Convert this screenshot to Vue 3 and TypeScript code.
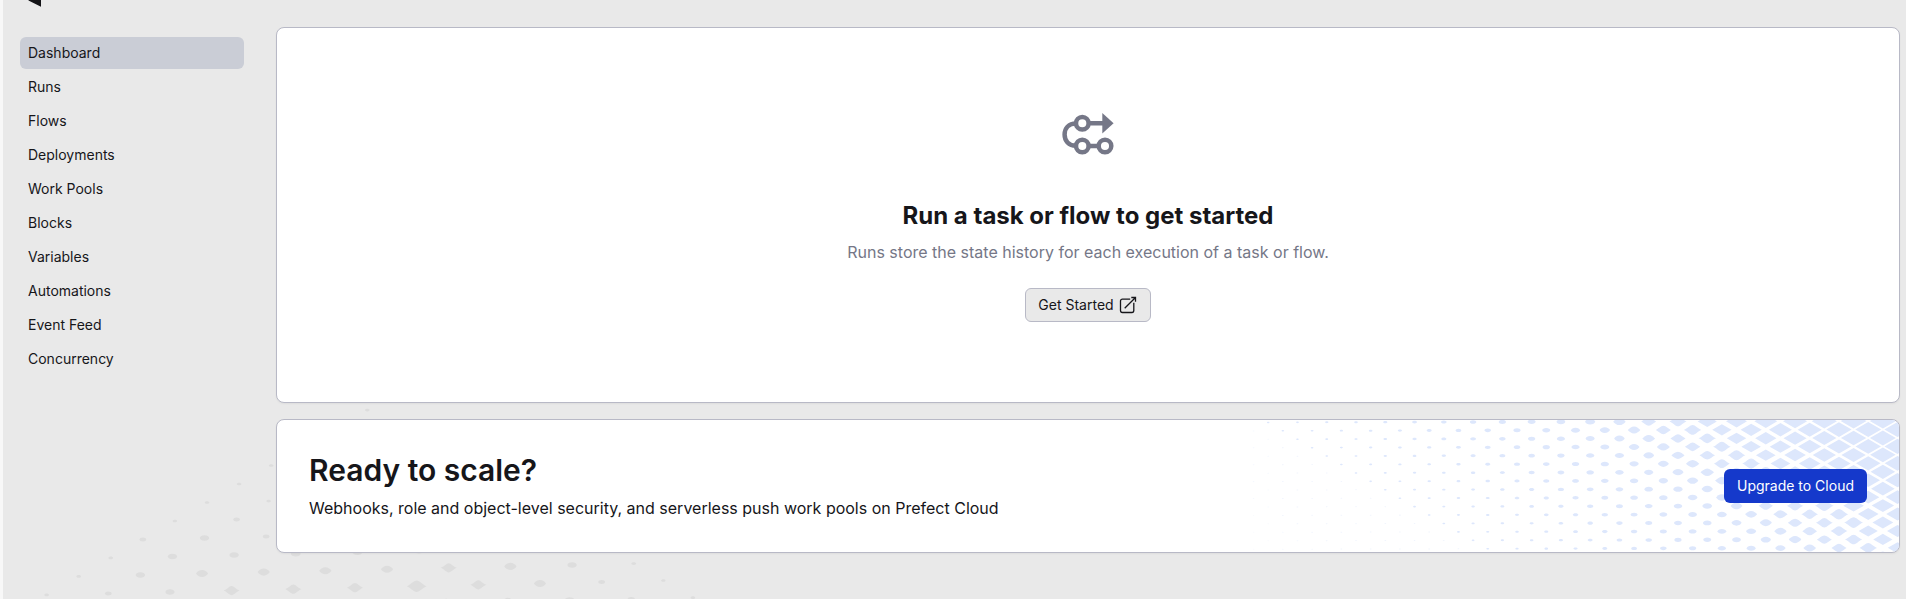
<script setup lang="ts">
interface Dot {
  d: string
  o: number
}

const navItems: string[] = [
  'Dashboard', 'Runs', 'Flows', 'Deployments', 'Work Pools',
  'Blocks', 'Variables', 'Automations', 'Event Feed', 'Concurrency',
]

// Small dots are ellipses; larger ones sharpen into diamonds.
function dotPath(cx: number, cy: number, rx: number, ry: number, sharp: number): string {
  const a = 0.55 - 0.3 * sharp
  const b = 0.55 + 0.1 * sharp
  const ax = rx * (1 - 0.4 * sharp)
  const ux = rx * (b - 0.35 * sharp)
  const f = (n: number) => n.toFixed(2)
  const quad = (sx: number, sy: number, fromSide: boolean) =>
    fromSide
      ? `C${f(cx + sx * ax)} ${f(cy + sy * ry * a)} ${f(cx + sx * ux)} ${f(cy + sy * ry)} ${f(cx)} ${f(cy + sy * ry)}`
      : `C${f(cx + sx * ux)} ${f(cy + sy * ry)} ${f(cx + sx * ax)} ${f(cy + sy * ry * a)} ${f(cx + sx * rx)} ${f(cy)}`
  return `M${f(cx + rx)} ${f(cy)}${quad(1, 1, true)}${quad(-1, 1, false)}${quad(-1, -1, true)}${quad(1, -1, false)}Z`
}

// Diamonds with straight edges, used where the banner pattern is densest.
function diamondPath(cx: number, cy: number, rx: number, ry: number): string {
  return `M${cx - rx} ${cy}L${cx} ${cy - ry}L${cx + rx} ${cy}L${cx} ${cy + ry}Z`
}

const sizeStops: [number, number][] = [
  [1090, 0.9], [1283, 1.3], [1372, 1.8], [1400, 2.1], [1483, 3.2], [1576, 4.4], [1605, 5.2],
  [1634, 6.3], [1663, 7.5], [1692, 8.7], [1780, 11.5], [1853, 12.9], [1920, 13.2],
]

function sizeAt(t: number): number {
  if (t <= sizeStops[0][0]) return sizeStops[0][1]
  for (let i = 1; i < sizeStops.length; i++) {
    const [x0, r0] = sizeStops[i - 1]
    const [x1, r1] = sizeStops[i]
    if (t <= x1) return r0 + ((r1 - r0) * (t - x0)) / (x1 - x0)
  }
  return 13.2
}

const bannerDots: Dot[] = []
for (let row = 0; row < 17; row++) {
  for (let col = -1; col < 46; col++) {
    if (Math.abs(row + col) % 2 === 1) continue
    const x = 1268.2 + col * 14.635
    const y = 422.4 + row * 8.456 - (x - 1268) * 0.0022
    const strong = col >= row
    const r = strong ? Math.max(1.3, sizeAt(x - 1.48 * (y - 430))) : 0.9
    const fade = 0.5 - (col < 1 ? 0.15 : 0) - (row - col > 10 ? 0.15 : 0)
    const px = x - 1240
    const py = y - 420
    const sharp = Math.min(1, Math.max(0, (r - 4.2) / 4))
    bannerDots.push({
      d: r > 9.5 ? diamondPath(px, py, r, r * 0.578) : dotPath(px, py, r, r * 0.56, sharp),
      o: strong ? 1 : fade,
    })
  }
}

// Each row: lattice row index, first step along the row, and half-widths of its dots.
const groundRows: [number, number, number[]][] = [
  [-9, 0, [2.3]],
  [-6, 0, [2.3]],
  [-5, 0, [2.3]],
  [-4, 0, [2.3, 2.3]],
  [-3, 0, [2.3, 3.4]],
  [-2, 0, [3.4, 4.7, 3.4]],
  [-1, 0, [2.3, 4.7, 4.7, 4.9, 4.9, 4.7]],
  [0, 0, [2.3, 4.7, 6.1, 6.1, 6.1, 6.1, 8, 6.1, 4.7, 2.4]],
  [1, 0, [2.3, 3.4, 4.6, 8, 8, 8, 10, 8, 6.1, 3.4, 2.2]],
  [2, 6, [9, 8, 7, 5.5, 3.6, 2.3]],
]

const groundDots: string[] = groundRows.flatMap(([n, start, sizes]) =>
  sizes.map((r, i) => {
    const k = start + i
    const x = 78.7 - n * 32.07 + k * 61.67
    const y = 576.4 + n * 18.48 - k * 1.43
    return dotPath(x, y, r, r * 0.58, Math.min(1, Math.max(0, (r - 5) / 3)))
  }),
)
</script>

<template>
  <div class="page">
    <svg class="ground" width="760" height="599" viewBox="0 0 760 599" aria-hidden="true">
      <path v-for="(d, i) in groundDots" :key="i" :d="d" />
    </svg>
    <aside class="sidebar">
      <svg class="logo" width="28" height="7" viewBox="0 0 28 7" aria-hidden="true">
        <path d="M0.5 0H13V6.8L0.5 0.6Z" />
      </svg>
      <nav class="nav">
        <a v-for="(item, i) in navItems" :key="item" class="nav-item" :class="{ active: i === 0 }">{{ item }}</a>
      </nav>
    </aside>
    <main class="content">
      <section class="card empty">
        <svg class="flow-icon" width="64" height="64" viewBox="0 0 64 64" aria-hidden="true">
          <g fill="none" stroke="currentColor" stroke-width="4.5">
            <circle cx="26.3" cy="22.3" r="6.3" />
            <circle cx="26.3" cy="45" r="6.3" />
            <circle cx="49" cy="45" r="6.3" />
            <path d="M33 22.3H47M33 45H42.5M20 22.5C12.5 22.5 8.6 27.5 8.6 33.6S12.5 44.8 20 44.8" />
          </g>
          <path fill="currentColor" d="M46.3 12L57.6 22.3L46.3 32.4Z" />
        </svg>
        <h2 class="empty-title">Run a task or flow to get started</h2>
        <p class="empty-text">Runs store the state history for each execution of a task or flow.</p>
        <button class="button secondary" type="button">
          Get Started
          <svg width="20" height="20" viewBox="0 0 20 20" fill="none" stroke="currentColor" stroke-width="1.3" aria-hidden="true">
            <path d="M12.2 4.2H4.4A1.9 1.9 0 0 0 2.5 6.1V15.6A1.9 1.9 0 0 0 4.4 17.5H13.9A1.9 1.9 0 0 0 15.8 15.6V7.8M6.7 13.3L17.5 2.5M13.3 2.5H17.5V6.7" />
          </svg>
        </button>
      </section>
      <section class="card banner">
        <svg class="banner-dots" width="659" height="132" viewBox="0 0 659 132" aria-hidden="true">
          <path v-for="(dot, i) in bannerDots" :key="i" :d="dot.d" :opacity="dot.o" />
        </svg>
        <div class="banner-copy">
          <h2 class="banner-title">Ready to scale?</h2>
          <p class="banner-text">Webhooks, role and object-level security, and serverless push work pools on Prefect Cloud</p>
        </div>
        <button class="button primary" type="button">Upgrade to Cloud</button>
      </section>
    </main>
  </div>
</template>

<style>
body {
  margin: 0;
  background: #e9e9e9;
}
</style>

<style scoped>
.page {
  position: relative;
  box-sizing: border-box;
  display: flex;
  width: 100%;
  height: 599px;
  overflow: hidden;
  border-left: 3px solid #f8f8f8;
  background: #e9e9e9;
  color: #16161a;
  font-family: Inter, sans-serif;
}
.ground {
  position: absolute;
  top: 0;
  left: -3px;
  fill: #dddddd;
}
.sidebar {
  position: relative;
  box-sizing: border-box;
  flex: none;
  width: 257px;
  padding: 0 16px 0 17px;
}
.logo {
  display: block;
  margin: 0 0 30px 8px;
  fill: #131316;
}
.nav {
  display: flex;
  flex-direction: column;
  gap: 2px;
}
.nav-item {
  width: 208px;
  padding: 6px 8px;
  border-radius: 6px;
  font-size: 14px;
  line-height: 20px;
}
.nav-item.active {
  background: #cacdd6;
}
.content {
  position: relative;
  flex: 1;
  display: flex;
  flex-direction: column;
  gap: 16px;
  padding: 27px 6px 0 16px;
}
.card {
  box-sizing: border-box;
  border: 1px solid #b8b9c6;
  border-radius: 8px;
  background: #fff;
  box-shadow: 0 1px 2px rgba(0, 0, 0, 0.05);
}
.empty {
  display: flex;
  flex-direction: column;
  align-items: center;
  height: 376px;
  padding-top: 73px;
}
.flow-icon {
  flex: none;
  color: #757787;
}
.empty-title {
  margin: 35px 0 0;
  font-size: 24px;
  font-weight: 700;
  line-height: 32px;
}
.empty-text {
  margin: 8px 0 0;
  color: #757787;
  font-size: 16px;
  line-height: 24px;
}
.button {
  box-sizing: border-box;
  display: flex;
  align-items: center;
  gap: 4px;
  height: 34px;
  padding: 0 12px;
  border: 1px solid transparent;
  border-radius: 6px;
  font-family: inherit;
  font-size: 14px;
  line-height: 20px;
}
.secondary {
  margin-top: 24px;
  border-color: #b8b9c6;
  background: #e9e9e9;
  color: #16161a;
}
.primary {
  position: relative;
  background: #1539cb;
  color: #fff;
}
.banner {
  position: relative;
  display: flex;
  align-items: center;
  justify-content: space-between;
  height: 134px;
  padding: 0 32px;
  overflow: hidden;
}
.banner-dots {
  position: absolute;
  top: 0;
  right: 0;
  fill: #dde7fc;
}
.banner-title {
  margin: 0;
  font-size: 30px;
  font-weight: 600;
  line-height: 36px;
}
.banner-text {
  margin: 8px 0 0;
  font-size: 16px;
  line-height: 24px;
}
</style>
